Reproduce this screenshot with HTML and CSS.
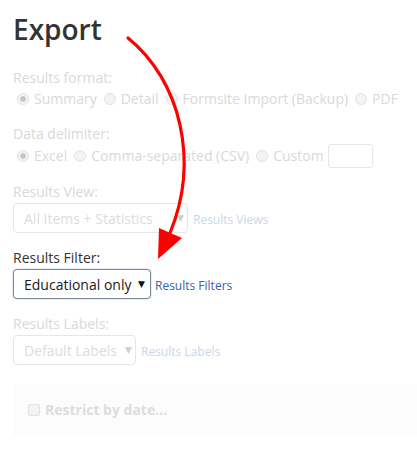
FILE: index.html
```html
<!DOCTYPE html>
<html>
<head>
<meta charset="utf-8">
<link rel="stylesheet" href="styles.css">
</head>
<body>
<div class="page">
  <h1 class="title">Export</h1>

  <div class="group group-first">
    <div class="label">Results format:</div>
    <div class="row">
      <input type="radio" class="radio" name="fmt" checked disabled><span class="opt">Summary</span>
      <input type="radio" class="radio" name="fmt" disabled><span class="opt">Detail</span>
      <input type="radio" class="radio" name="fmt" disabled><span class="opt">Formsite Import (Backup)</span>
      <input type="radio" class="radio" name="fmt" disabled><span class="opt">PDF</span>
    </div>
  </div>

  <div class="group">
    <div class="label">Data delimiter:</div>
    <div class="row row-tall">
      <input type="radio" class="radio" name="del" checked disabled><span class="opt">Excel</span>
      <input type="radio" class="radio" name="del" disabled><span class="opt">Comma-separated (CSV)</span>
      <input type="radio" class="radio" name="del" disabled><span class="opt">Custom</span>
      <span class="custom-box"></span>
    </div>
  </div>

  <div class="group">
    <div class="label">Results View:</div>
    <div class="sel-row">
      <div class="select select-view"><span class="sel-text">All Items + Statistics</span><span class="caret">&#9660;</span></div>
      <span class="link">Results Views</span>
    </div>
  </div>

  <div class="group active">
    <div class="label">Results Filter:</div>
    <div class="sel-row">
      <div class="select select-filter"><span class="sel-text">Educational only</span><span class="caret">&#9660;</span></div>
      <span class="link">Results Filters</span>
    </div>
  </div>

  <div class="group">
    <div class="label">Results Labels:</div>
    <div class="sel-row">
      <div class="select select-labels"><span class="sel-text">Default Labels</span><span class="caret">&#9660;</span></div>
      <span class="link">Results Labels</span>
    </div>
  </div>

  <div class="panel">
    <span class="checkbox"></span><span class="panel-text">Restrict by date...</span>
  </div>
</div>

<svg class="annotation" width="417" height="450" viewBox="0 0 417 450">
  <path d="M128,38 C180,80 200,160 170,233" fill="none" stroke="#ff0000" stroke-width="3.2" stroke-linecap="round"/>
  <polygon points="158,259 159,228 182,238" fill="#ff0000"/>
</svg>
</body>
</html>
```

FILE: styles.css
```css
html, body {
  margin: 0;
  padding: 0;
  background: #ffffff;
  overflow: hidden;
}

body {
  font-family: "Open Sans", "Liberation Sans", Arial, sans-serif;
  font-size: 14px;
  color: #d9d9d9;
  width: 417px;
  height: 450px;
  position: relative;
}

.page {
  padding: 0 0 0 13px;
}

.title {
  margin: 14px 0 0 0;
  font-size: 28px;
  line-height: 30.8px;
  font-weight: 600;
  color: #333333;
}

.group {
  margin-top: 15px;
}

.group-first {
  margin-top: 23px;
}

.label {
  line-height: 20px;
  margin-bottom: 1px;
  color: #d9d9d9;
}

.row {
  display: flex;
  align-items: center;
  height: 20px;
  white-space: nowrap;
}

.row-tall {
  height: 22px;
}

.radio {
  appearance: none;
  -webkit-appearance: none;
  width: 12px;
  height: 12px;
  margin: 0 5px 0 4px;
  border: 1px solid #e2e2e2;
  border-radius: 50%;
  background: #f3f3f3;
  box-sizing: border-box;
  flex: none;
}

.opt + .radio {
  margin-left: 7px;
}

.radio:checked {
  background: radial-gradient(circle, #c6c6c6 0 2.4px, #f3f3f3 3.2px);
}

.opt {
  line-height: 20px;
  color: #d9d9d9;
}

.custom-box {
  width: 45px;
  height: 24px;
  box-sizing: border-box;
  border: 1px solid #e6e6e6;
  border-radius: 3px;
  margin-left: 4px;
  flex: none;
}

.sel-row {
  display: flex;
  align-items: baseline;
  white-space: nowrap;
}

.select {
  display: inline-flex;
  align-items: baseline;
  height: 30px;
  box-sizing: border-box;
  border: 1px solid #e6e6e6;
  border-radius: 4px;
  padding: 5px 0 0 10px;
  line-height: 20px;
  color: #dcdcdc;
  background: #ffffff;
}

.sel-text {
  flex: none;
}

.caret {
  align-self: center;
  margin-top: -4px;
  font-size: 9px;
  line-height: 10px;
  color: #cfcfcf;
  margin-left: auto;
  padding-right: 3px;
  font-family: "DejaVu Sans", sans-serif;
}

.select-view { width: 175px; }
.select-filter { width: 138px; }
.select-labels { width: 123px; }

.link {
  font-size: 12px;
  color: #c9d6ec;
  margin-left: 5px;
}

.active .label {
  color: #333333;
}

.active .select {
  border-color: #7d8694;
  box-shadow: 0 0 2px rgba(102, 140, 204, 0.55);
  color: #1a1a1a;
}

.active .caret {
  color: #111111;
  padding-right: 5px;
}

.active .link {
  color: #3a61ad;
  margin-left: 4px;
}

.panel {
  margin-top: 19px;
  width: 420px;
  height: 52px;
  box-sizing: border-box;
  background: #fcfcfc;
  display: flex;
  align-items: center;
  padding-left: 15px;
}

.checkbox {
  width: 12px;
  height: 12px;
  box-sizing: border-box;
  border: 1px solid #e2e2e2;
  border-radius: 2px;
  background: #f3f3f3;
  margin-right: 5px;
  flex: none;
}

.panel-text {
  font-weight: 700;
  color: #dddddd;
  line-height: 20px;
}

.annotation {
  position: absolute;
  left: 0;
  top: 0;
  pointer-events: none;
}
```
